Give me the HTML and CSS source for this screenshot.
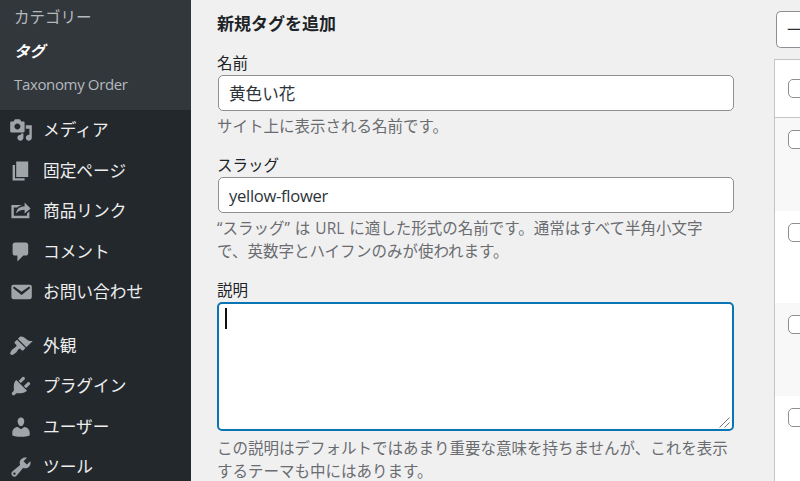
FILE: index.html
```html
<!DOCTYPE html>
<html lang="ja">
<head>
    <meta charset="UTF-8">
    <meta name="viewport" content="width=device-width, initial-scale=1.0">
    <title>タグ</title>
    <link rel="stylesheet" href="styles.css">
</head>
<body>
    <nav class="sidebar">
        <ul class="submenu">
            <li><a>カテゴリー</a></li>
            <li><a class="current">タグ</a></li>
            <li><a>Taxonomy Order</a></li>
        </ul>
        <ul class="menu">
            <li>
                <svg class="icon" viewBox="0 0 20 20"><path d="M13 11V4c0-.55-.45-1-1-1h-1.67L9 1H5L3.67 3H2c-.55 0-1 .45-1 1v7c0 .55.45 1 1 1h10c.55 0 1-.45 1-1zM7 4.5c1.38 0 2.5 1.12 2.5 2.5S8.38 9.5 7 9.5 4.5 8.38 4.5 7 5.62 4.5 7 4.5zM14 6h5v10.5c0 1.38-1.12 2.5-2.5 2.5S14 17.88 14 16.5s1.12-2.5 2.5-2.5c.17 0 .34.02.5.05V9h-3V6zM10 14.05V13h2v3.5c0 1.38-1.12 2.5-2.5 2.5S7 17.88 7 16.5 8.12 14 9.5 14c.17 0 .34.02.5.05z"/></svg>
                <span>メディア</span>
            </li>
            <li>
                <svg class="icon" viewBox="0 0 20 20"><path d="M6 15V2h10v13H6zm-1 1h8v2H3V5h2v11z"/></svg>
                <span>固定ページ</span>
            </li>
            <li>
                <svg class="icon" viewBox="0 0 20 20"><path d="M18 8l-5 4V9.01c-2.58.06-4.88.45-7 2.99.29-3.57 2.66-5.66 7-5.94V3zM4 14h11v-2l2-1.6V16H2V5h9.43c-1.83.32-3.31 1-4.41 2H4v7z"/></svg>
                <span>商品リンク</span>
            </li>
            <li>
                <svg class="icon" viewBox="0 0 20 20"><path d="M5 2h9c1.1 0 2 .9 2 2v7c0 1.1-.9 2-2 2h-2l-5 5v-5H5c-1.1 0-2-.9-2-2V4c0-1.1.9-2 2-2z"/></svg>
                <span>コメント</span>
            </li>
            <li>
                <svg class="icon" viewBox="0 0 20 20"><path d="M3.87 4h13.25C18.37 4 19 4.59 19 5.79v8.42c0 1.19-.63 1.79-1.88 1.79H3.87c-1.25 0-1.88-.6-1.88-1.79V5.79c0-1.2.63-1.79 1.88-1.79zm6.62 8.6l6.74-5.53c.24-.2.43-.66.13-1.07-.29-.41-.82-.42-1.17-.17l-5.7 3.86L4.8 5.83c-.35-.25-.88-.24-1.17.17-.3.41-.11.87.13 1.07z"/></svg>
                <span>お問い合わせ</span>
            </li>
            <li class="separator"></li>
            <li>
                <svg class="icon" viewBox="0 0 20 20"><path d="M14.48 11.06L7.41 3.99l1.5-1.5c.5-.56 2.3-.47 3.51.32 1.21.8 1.43 1.28 2.91 2.1 1.18.64 2.45 1.26 4.45.85zm-.71.71L6.7 4.7 4.93 6.47c-.39.39-.39 1.02 0 1.41l1.06 1.06c.39.39.39 1.03 0 1.42-.6.6-1.43 1.11-2.21 1.69-.35.26-.7.53-1.01.84C1.43 14.23.4 16.08 1.4 17.07c.99 1 2.84-.03 4.18-1.36.31-.31.58-.66.85-1.02.57-.78 1.08-1.61 1.69-2.21.39-.39 1.02-.39 1.41 0l1.06 1.06c.39.39 1.02.39 1.41 0z"/></svg>
                <span>外観</span>
            </li>
            <li>
                <svg class="icon" viewBox="0 0 20 20"><path d="M13.11 4.36L9.87 7.6 8 5.73l3.24-3.24c.35-.34 1.05-.2 1.56.32.52.51.66 1.21.31 1.55zm-8 1.77l.91-1.12 9.01 9.01-1.19.84c-.71.71-2.63 1.16-3.82 1.16H6.14L4.9 17.26c-.59.59-1.54.59-2.12 0-.59-.58-.59-1.53 0-2.12l1.24-1.24v-3.88c0-1.13.4-3.19 1.09-3.89zm7.26 3.97l3.24-3.24c.34-.35 1.04-.21 1.55.31.52.51.66 1.21.31 1.55l-3.24 3.25z"/></svg>
                <span>プラグイン</span>
            </li>
            <li>
                <svg class="icon" viewBox="0 0 20 20"><path d="M10 9.25c-2.27 0-2.73-3.44-2.73-3.44C7 4.02 7.82 2 9.97 2c2.16 0 2.98 2.02 2.71 3.81 0 0-.41 3.44-2.68 3.44zm0 2.57L12.72 10c2.39 0 4.52 2.33 4.52 4.53v2.49s-3.65 1.13-7.24 1.13c-3.65 0-7.24-1.13-7.24-1.13v-2.49c0-2.25 1.94-4.48 4.47-4.48z"/></svg>
                <span>ユーザー</span>
            </li>
            <li>
                <svg class="icon" viewBox="0 0 20 20"><path d="M16.68 9.77c-1.34 1.34-3.3 1.67-4.95.99l-5.41 6.52c-.99.99-2.59.99-3.58 0s-.99-2.59 0-3.57l6.52-5.42c-.68-1.65-.35-3.61.99-4.95 1.28-1.28 3.12-1.62 4.72-1.06l-2.89 2.89 2.82 2.82 2.86-2.87c.53 1.58.18 3.39-1.08 4.65zM3.81 16.21c.4.39 1.04.39 1.43 0 .4-.4.4-1.04 0-1.43-.39-.4-1.03-.4-1.43 0-.39.39-.39 1.03 0 1.43z"/></svg>
                <span>ツール</span>
            </li>
        </ul>
    </nav>

    <main class="form">
        <h2>新規タグを追加</h2>
        <div class="field">
            <label for="tag-name">名前</label>
            <input type="text" id="tag-name" value="黄色い花">
            <p>サイト上に表示される名前です。</p>
        </div>
        <div class="field">
            <label for="tag-slug">スラッグ</label>
            <input type="text" id="tag-slug" class="slug" value="yellow-flower">
            <p>“スラッグ” は URL に適した形式の名前です。通常はすべて半角小文字<br>で、英数字とハイフンのみが使われます。</p>
        </div>
        <div class="field">
            <label for="tag-description">説明</label>
            <div class="textarea-wrap">
                <textarea id="tag-description"></textarea>
                <span class="caret"></span>
                <svg class="grip" viewBox="0 0 11 11"><path d="M.5 10.5l10-10M5.5 10.5l5-5"/></svg>
            </div>
            <p>この説明はデフォルトではあまり重要な意味を持ちませんが、これを表示<br>するテーマも中にはあります。</p>
        </div>
    </main>

    <aside class="list">
        <div class="bulk">一</div>
        <div class="table">
            <div class="row head"><span class="check"></span></div>
            <div class="row alt"><span class="check"></span></div>
            <div class="row"><span class="check"></span></div>
            <div class="row alt"><span class="check"></span></div>
            <div class="row"><span class="check"></span></div>
        </div>
    </aside>
</body>
</html>
```
FILE: styles.css
```css
* {
    box-sizing: border-box;
}
body {
    display: flex;
    width: 800px;
    height: 481px;
    margin: 0;
    overflow: hidden;
    background: #f0f0f1;
    color: #1d2327;
    font-family: "Open Sans", "Noto Sans CJK JP", sans-serif;
    font-size: 15.5px;
}
ul {
    margin: 0;
    padding: 0;
    list-style: none;
}

/* サイドバー */
.sidebar {
    flex: none;
    width: 191px;
    height: 481px;
    overflow: hidden;
    background: #23282d;
}
.submenu {
    height: 110px;
    padding: 1px 0 0 14px;
    background: #32373c;
    color: #b4b9be;
    line-height: 33.5px;
}
.submenu li {
    height: 33.5px;
}
.submenu li:last-child {
    font-size: 15px;
    letter-spacing: -0.35px;
}
.submenu .current {
    color: #fff;
    font-weight: bold;
    font-style: italic;
}
.menu li {
    display: flex;
    align-items: center;
    gap: 10px;
    height: 40.5px;
    padding-left: 9px;
    color: #eee;
    font-size: 16.7px;
    line-height: 22px;
    white-space: nowrap;
}
.menu .separator {
    height: 13px;
}
.icon {
    flex: none;
    width: 24px;
    height: 24px;
    fill: #a0a5aa;
}

/* 入力フォーム */
.form {
    flex: none;
    width: 557px;
    padding: 12px 0 0 26px;
}
h2 {
    margin: 0 0 15px;
    font-size: 17px;
    line-height: 24px;
}
.field {
    margin-bottom: 15px;
}
label {
    display: block;
    height: 24px;
    line-height: 24px;
}
input {
    display: block;
    width: 516px;
    height: 36px;
    margin-left: 1px;
    padding: 0 10px;
    border: 1px solid #8c8f94;
    border-radius: 5px;
    background: #fff;
    color: #2c3338;
    font-family: inherit;
    font-size: 16.6px;
}
.slug {
    letter-spacing: -0.3px;
}
.field p {
    margin: 4px 0 0;
    color: #6a6c70;
    line-height: 23px;
    word-spacing: 1px;
    white-space: nowrap;
}
.textarea-wrap {
    position: relative;
    width: 517px;
    height: 129px;
    margin-bottom: 6px;
}
textarea {
    display: block;
    width: 517px;
    height: 129px;
    border: 2px solid #0a75b5;
    border-radius: 5px;
    background: #fff;
    outline: none;
    resize: none;
}
.caret {
    position: absolute;
    top: 6px;
    left: 8px;
    width: 2px;
    height: 21px;
    background: #111;
}
.grip {
    position: absolute;
    right: 4px;
    bottom: 3px;
    width: 11px;
    height: 11px;
    fill: none;
    stroke: #777;
}

/* タグ一覧 */
.list {
    flex: 1;
    min-width: 0;
    overflow: hidden;
    padding-top: 11px;
    padding-left: 26px;
}
.bulk {
    height: 37px;
    margin: 0 0 11px 2px;
    padding-left: 10px;
    border: 1px solid #8c8f94;
    border-right: 0;
    border-radius: 5px 0 0 5px;
    background: #fff;
    color: #2c3338;
    font-size: 16.6px;
    line-height: 35px;
    white-space: nowrap;
}
.table {
    border: 1px solid #c3c4c7;
    border-right: 0;
    background: #fff;
}
.row {
    height: 92.5px;
    padding: 12px 0 0 13px;
}
.head {
    height: 58px;
    padding-top: 19px;
    border-bottom: 1px solid #c3c4c7;
}
.alt {
    background: #f8f8f8;
}
.check {
    display: block;
    width: 19px;
    height: 19px;
    border: 1px solid #8c8f94;
    border-radius: 5px;
    background: #fff;
}
```
